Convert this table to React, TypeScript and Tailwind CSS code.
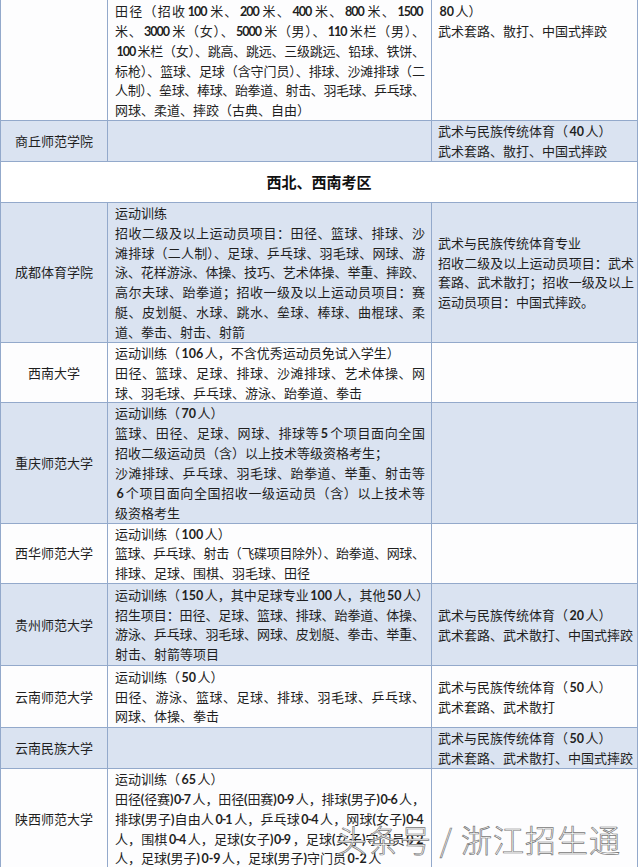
import React from "react";

type Ln = { t: string; j: boolean };
const J = (t: string): Ln => ({ t, j: true });
const N = (t: string): Ln => ({ t, j: false });

type Row =
  | { kind: "header"; title: string }
  | {
      kind: "row";
      name: string;
      blue: boolean;
      c2: Ln[];
      c3: Ln[];
      c3Top?: boolean;
      first?: boolean;
      extra?: boolean;
    };

const rows: Row[] = [
  {
    kind: "row",
    name: "",
    blue: false,
    first: true,
    c3Top: true,
    c2: [
      J("田径（招收100米、200米、400米、800米、1500"),
      J("米、3000米（女）、5000米（男）、110米栏（男）、"),
      J("100米栏（女）、跳高、跳远、三级跳远、铅球、铁饼、"),
      J("标枪）、篮球、足球（含守门员）、排球、沙滩排球（二"),
      J("人制）、垒球、棒球、跆拳道、射击、羽毛球、乒乓球、"),
      N("网球、柔道、摔跤（古典、自由）"),
    ],
    c3: [N("80人）"), N("武术套路、散打、中国式摔跤")],
  },
  {
    kind: "row",
    name: "商丘师范学院",
    blue: true,
    c2: [],
    c3: [N("武术与民族传统体育（40人）"), N("武术套路、散打、中国式摔跤")],
  },
  { kind: "header", title: "西北、西南考区" },
  {
    kind: "row",
    name: "成都体育学院",
    blue: true,
    c2: [
      N("运动训练"),
      J("招收二级及以上运动员项目：田径、篮球、排球、沙"),
      J("滩排球（二人制）、足球、乒乓球、羽毛球、网球、游"),
      J("泳、花样游泳、体操、技巧、艺术体操、举重、摔跤、"),
      J("高尔夫球、跆拳道；招收一级及以上运动员项目：赛"),
      J("艇、皮划艇、水球、跳水、垒球、棒球、曲棍球、柔"),
      N("道、拳击、射击、射箭"),
    ],
    c3: [
      N("武术与民族传统体育专业"),
      J("招收二级及以上运动员项目：武术"),
      J("套路、武术散打；招收一级及以上"),
      N("运动员项目：中国式摔跤。"),
    ],
  },
  {
    kind: "row",
    name: "西南大学",
    blue: false,
    c2: [
      N("运动训练（106人，不含优秀运动员免试入学生）"),
      J("田径、篮球、足球、排球、沙滩排球、艺术体操、网"),
      N("球、羽毛球、乒乓球、游泳、跆拳道、拳击"),
    ],
    c3: [],
  },
  {
    kind: "row",
    name: "重庆师范大学",
    blue: true,
    c2: [
      N("运动训练（70人）"),
      J("篮球、田径、足球、网球、排球等5个项目面向全国"),
      N("招收二级运动员（含）以上技术等级资格考生；"),
      J("沙滩排球、乒乓球、羽毛球、跆拳道、举重、射击等"),
      J("6个项目面向全国招收一级运动员（含）以上技术等"),
      N("级资格考生"),
    ],
    c3: [],
  },
  {
    kind: "row",
    name: "西华师范大学",
    blue: false,
    c2: [
      N("运动训练（100人）"),
      J("篮球、乒乓球、射击（飞碟项目除外）、跆拳道、网球、"),
      N("排球、足球、围棋、羽毛球、田径"),
    ],
    c3: [],
  },
  {
    kind: "row",
    name: "贵州师范大学",
    blue: true,
    extra: true,
    c2: [
      N("运动训练（150人，其中足球专业100人，其他50人）"),
      J("招生项目：田径、足球、篮球、排球、跆拳道、体操、"),
      J("游泳、乒乓球、羽毛球、网球、皮划艇、拳击、举重、"),
      N("射击、射箭等项目"),
    ],
    c3: [N("武术与民族传统体育（20人）"), N("武术套路、武术散打、中国式摔跤")],
  },
  {
    kind: "row",
    name: "云南师范大学",
    blue: false,
    extra: true,
    c2: [
      N("运动训练（50人）"),
      J("田径、游泳、篮球、足球、排球、羽毛球、乒乓球、"),
      N("网球、体操、拳击"),
    ],
    c3: [N("武术与民族传统体育（50人）"), N("武术套路、武术散打")],
  },
  {
    kind: "row",
    name: "云南民族大学",
    blue: true,
    c2: [],
    c3: [N("武术与民族传统体育（50人）"), N("武术套路、武术散打、中国式摔跤")],
  },
  {
    kind: "row",
    name: "陕西师范大学",
    blue: false,
    c2: [
      N("运动训练（65人）"),
      J("田径(径赛)0-7人，田径(田赛)0-9人，排球(男子)0-6人，"),
      J("排球(男子)自由人0-1人，乒乓球0-4人，网球(女子)0-4"),
      J("人，围棋0-4人，足球(女子)0-9，足球(女子)守门员0-2"),
      N("人，足球(男子)0-9人，足球(男子)守门员0-2人"),
    ],
    c3: [],
  },
];

function Text({ t }: { t: string }) {
  const parts = t.split(/(\d+(?:-\d+)?|[()])/);
  return (
    <>
      {parts.map((p, i) => {
        if (!p) return null;
        if (/^\d/.test(p))
          return (
            <span
              key={i}
              className="font-['Lato',sans-serif] font-bold text-[12.5px] leading-[8px] mx-[1.5px]"
            >
              {p}
            </span>
          );
        if (p === "(" || p === ")")
          return (
            <span key={i} className="font-['Lato',sans-serif] font-bold text-[12.5px] leading-[8px]">
              {p}
            </span>
          );
        return <React.Fragment key={i}>{p}</React.Fragment>;
      })}
    </>
  );
}

function Lines({ lines }: { lines: Ln[] }) {
  return (
    <>
      {lines.map((l, i) => (
        <div
          key={i}
          className={
            l.j
              ? "h-[19.86px] whitespace-nowrap text-justify [text-align-last:justify] tracking-[-1px]"
              : "h-[19.86px] whitespace-nowrap"
          }
        >
          <Text t={l.t} />
        </div>
      ))}
    </>
  );
}

export default function App() {
  return (
    <div className="relative w-[640px] h-[867px] overflow-hidden bg-white text-[#1f1f1f] font-['Noto_Sans_CJK_SC','Noto_Sans',sans-serif] text-[13px] leading-[19.86px]">
      <div className="w-[638px] border-l border-[#93a9cb]">
        {rows.map((r, idx) => {
          if (r.kind === "header") {
            return (
              <div
                key={idx}
                className="h-[41px] border-b border-r border-[#93a9cb] bg-white flex items-center justify-center font-bold text-[15px] text-[#111]"
              >
                {r.title}
              </div>
            );
          }
          const bg = r.blue ? "bg-[#dae3f1]" : "bg-[#fdfdfe]";
          return (
            <div
              key={idx}
              className={`flex border-b border-[#93a9cb] ${bg} ${r.extra ? "min-h-0" : ""}`}
            >
              <div className="w-[107px] shrink-0 border-r border-[#93a9cb] flex items-center justify-center">
                {r.name}
              </div>
              <div
                className={`w-[324px] shrink-0 border-r border-[#93a9cb] px-[7px] ${
                  r.first ? "pt-[1px]" : ""
                } ${r.extra ? "pt-[0.5px] pb-[1px]" : ""}`}
              >
                <Lines lines={r.c2} />
              </div>
              <div
                className={`w-[206px] shrink-0 border-r border-[#93a9cb] pl-[6px] pr-[4px] flex flex-col ${
                  r.c3Top ? "justify-start pt-[1px]" : "justify-center"
                }`}
              >
                <Lines lines={r.c3} />
              </div>
            </div>
          );
        })}
      </div>
      <div className="absolute left-[336px] top-[817px] whitespace-nowrap text-[31px] leading-[44px] font-light text-white [-webkit-text-stroke:0.7px_#777] tracking-[1px]">
        头条号 / 浙江招生通
      </div>
    </div>
  );
}
